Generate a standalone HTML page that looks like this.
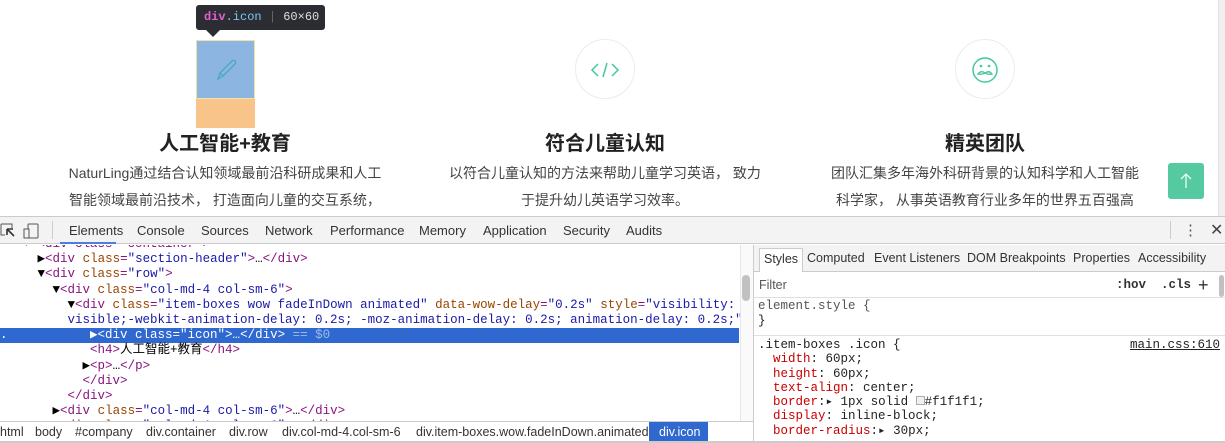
<!DOCTYPE html>
<html><head><meta charset="utf-8"><style>
*{margin:0;padding:0;box-sizing:border-box}
body{width:1225px;height:443px;overflow:hidden;background:#fff;position:relative;font-family:"Liberation Sans","Noto Sans CJK SC",sans-serif}
.a{position:absolute}
.h{font-size:20px;font-weight:bold;color:#222;text-align:center;width:380px}
.p{font-size:14px;color:#444;text-align:center;width:380px;line-height:27px}
.circ{width:60px;height:60px;border:1px solid #ececec;border-radius:30px}
.mono{font-family:"Liberation Mono","DejaVu Sans Mono",monospace;font-size:12.5px}
.lines div{white-space:pre;height:15.2px}
.tag{color:#881280}.at{color:#994500}.av{color:#1a1aa6}
.row span{position:absolute;top:0;white-space:pre}
</style></head><body>
<div class="a" style="left:1218px;top:0;width:7px;height:216px;background:#f0f0f0;border-left:1px solid #e0e0e0"></div>
<div class="a" style="left:196px;top:5px;width:129px;height:25px;background:#2b2d33;border-radius:3px;font-family:'Liberation Mono',monospace;font-size:12px;line-height:25px;padding-left:8px;color:#ddd;white-space:pre"><span style="color:#e35fd4;font-weight:bold">div</span><span style="color:#7fc7f0">.icon</span> <span style="color:#666">|</span> 60×60</div>
<div class="a" style="left:206px;top:30px;width:0;height:0;border-left:7px solid transparent;border-right:7px solid transparent;border-top:7px solid #2b2d33"></div>
<div class="a" style="left:196px;top:40px;width:59px;height:59px;background:#8db5e2;border:1px solid #f1e2a8"></div>
<div class="a" style="left:196px;top:99px;width:59px;height:29px;background:#f8c48a"></div>
<svg class="a" style="left:210px;top:54px" width="32" height="32" viewBox="0 0 32 32"><path d="M8 25 L10 19 L22 7 a2 2 0 0 1 3 3 L13 22 Z M10 19 L13 22" fill="none" stroke="#4ba8c7" stroke-width="1.3"/></svg>
<div class="a circ" style="left:575px;top:39px"></div>
<svg class="a" style="left:590px;top:60px" width="30" height="20" viewBox="0 0 30 20"><path d="M8 4 L2 10 L8 16 M22 4 L28 10 L22 16 M17 3 L13 17" fill="none" stroke="#45c99b" stroke-width="1.5"/></svg>
<div class="a circ" style="left:955px;top:39px"></div>
<svg class="a" style="left:970px;top:55px" width="30" height="30" viewBox="0 0 30 30"><circle cx="15" cy="15" r="12" fill="none" stroke="#45c99b" stroke-width="1.5"/><circle cx="11" cy="11" r="1.3" fill="#45c99b"/><circle cx="19" cy="11" r="1.3" fill="#45c99b"/><path d="M8 19 q3 -4 7 -1 q4 -3 7 1 q-3 1 -7 -1 q-4 2 -7 1z" fill="none" stroke="#45c99b" stroke-width="1.4"/></svg>
<div class="a h" style="left:35px;top:127px">人工智能+教育</div>
<div class="a h" style="left:415px;top:127px">符合儿童认知</div>
<div class="a h" style="left:795px;top:127px">精英团队</div>
<div class="a p" style="left:35px;top:160px">NaturLing通过结合认知领域最前沿科研成果和人工<br>智能领域最前沿技术， 打造面向儿童的交互系统，</div>
<div class="a p" style="left:415px;top:160px">以符合儿童认知的方法来帮助儿童学习英语， 致力<br>于提升幼儿英语学习效率。</div>
<div class="a p" style="left:795px;top:160px">团队汇集多年海外科研背景的认知科学和人工智能<br>科学家， 从事英语教育行业多年的世界五百强高</div>
<div class="a" style="left:1168px;top:163px;width:36px;height:36px;background:#55c9a0;border-radius:3px"></div>
<svg class="a" style="left:1176px;top:171px" width="20" height="20"><path d="M10 3 V17 M5 8 L10 3 L15 8" fill="none" stroke="#e8fff5" stroke-width="1.3"/></svg>
<div class="a" style="left:0;top:216px;width:1225px;height:1px;background:#cbcbcb"></div>
<div class="a" style="left:0;top:217px;width:1225px;height:27px;background:#f3f3f3;border-bottom:1px solid #ccc"></div>
<svg class="a" style="left:0;top:222px" width="45" height="18"><path d="M1 2 H12 V6 M1 2 V13 H5" fill="none" stroke="#555"/><path d="M7 7 L14 14 M7 7 V13 M7 7 H13" stroke="#333" stroke-width="1.6" fill="none"/><rect x="28" y="2" width="10" height="14" rx="1" fill="none" stroke="#555"/><rect x="24" y="7" width="5" height="9" fill="#f3f3f3" stroke="#555"/></svg>
<div class="a" style="left:52px;top:221px;width:1px;height:18px;background:#ccc"></div>
<div class="a row" style="left:0;top:217px;width:740px;height:27px;font-size:13px;color:#333;line-height:27px"><span style="left:69px">Elements</span><span style="left:137px">Console</span><span style="left:201px">Sources</span><span style="left:265px">Network</span><span style="left:330px">Performance</span><span style="left:419px">Memory</span><span style="left:483px">Application</span><span style="left:563px">Security</span><span style="left:626px">Audits</span></div>
<div class="a" style="left:60px;top:242px;width:56px;height:2px;background:#4a7fe1"></div>
<div class="a" style="left:1170px;top:221px;width:1px;height:18px;background:#ccc"></div>
<div class="a" style="left:1183px;top:218px;font-size:15px;color:#555;line-height:25px">⋮</div>
<div class="a" style="left:1210px;top:218px;font-size:16px;color:#444;line-height:25px">✕</div>
<div class="a" style="left:740px;top:245px;width:13px;height:176px;background:#fafafa;border-left:1px solid #e6e6e6"></div>
<div class="a" style="left:742px;top:275px;width:8px;height:26px;background:#c1c1c1;border-radius:4px"></div>
<div class="a" style="left:753px;top:245px;width:1px;height:198px;background:#ccc"></div>
<div class="a mono" style="left:0;top:245px;width:740px;height:176px;overflow:hidden">
<div class="lines" style="margin-top:-8px;line-height:15.2px">
<div style="color:#881280">   ▾ &lt;div class="container"&gt;</div>
<div>     ▶<span class="tag">&lt;div </span><span class="at">class</span><span class="tag">=</span><span class="av">"section-header"</span><span class="tag">&gt;</span>…<span class="tag">&lt;/div&gt;</span></div>
<div>     ▼<span class="tag">&lt;div </span><span class="at">class</span><span class="tag">=</span><span class="av">"row"</span><span class="tag">&gt;</span></div>
<div>       ▼<span class="tag">&lt;div </span><span class="at">class</span><span class="tag">=</span><span class="av">"col-md-4 col-sm-6"</span><span class="tag">&gt;</span></div>
<div>         ▼<span class="tag">&lt;div </span><span class="at">class</span><span class="tag">=</span><span class="av">"item-boxes wow fadeInDown animated"</span> <span class="at">data-wow-delay</span><span class="tag">=</span><span class="av">"0.2s"</span> <span class="at">style</span><span class="tag">=</span><span class="av">"visibility:</span></div>
<div>         <span class="av">visible;-webkit-animation-delay: 0.2s; -moz-animation-delay: 0.2s; animation-delay: 0.2s;"</span><span class="tag">&gt;</span></div>
<div style="background:#2f69d0;color:#fff;width:739px">.           ▶&lt;div class="icon"&gt;…&lt;/div&gt; <span style="color:#9fb8e8">== $0</span></div>
<div>            <span class="tag">&lt;h4&gt;</span>人工智能+教育<span class="tag">&lt;/h4&gt;</span></div>
<div>           ▶<span class="tag">&lt;p&gt;</span>…<span class="tag">&lt;/p&gt;</span></div>
<div>           <span class="tag">&lt;/div&gt;</span></div>
<div>         <span class="tag">&lt;/div&gt;</span></div>
<div>       ▶<span class="tag">&lt;div </span><span class="at">class</span><span class="tag">=</span><span class="av">"col-md-4 col-sm-6"</span><span class="tag">&gt;</span>…<span class="tag">&lt;/div&gt;</span></div>
<div>       ▶<span class="tag">&lt;div </span><span class="at">class</span><span class="tag">=</span><span class="av">"col-md-4 col-sm-6"</span><span class="tag">&gt;</span>…<span class="tag">&lt;/div&gt;</span></div>
</div></div>
<div class="a row" style="left:0;top:421px;width:753px;height:22px;background:#fff;border-top:1px solid #ccc;font-size:12.5px;color:#333;line-height:21px"><span style="left:0">html</span><span style="left:35px">body</span><span style="left:75px">#company</span><span style="left:146px">div.container</span><span style="left:229px">div.row</span><span style="left:282px">div.col-md-4.col-sm-6</span><span style="left:416px">div.item-boxes.wow.fadeInDown.animated</span><span style="left:649px;width:59px;height:21px;background:#2f69d0;color:#fff;padding-left:10px">div.icon</span></div>
<div class="a row" style="left:754px;top:245px;width:471px;height:27px;background:#f3f3f3;border-bottom:1px solid #ccc;font-size:12.5px;color:#333;line-height:27px"><span style="left:5px;top:3px;height:24px;line-height:21px;padding:0 4px;background:#fff;border:1px solid #ccc;border-bottom:none">Styles</span><span style="left:53px">Computed</span><span style="left:120px">Event Listeners</span><span style="left:213px">DOM Breakpoints</span><span style="left:319px">Properties</span><span style="left:384px">Accessibility</span></div>
<div class="a row" style="left:754px;top:272px;width:471px;height:26px;border-bottom:1px solid #e0e0e0;font-size:12.5px;color:#555;line-height:26px"><span style="left:5px">Filter</span><span class="mono" style="left:362px;font-weight:bold;color:#333">:hov  .cls</span><span style="left:444px;font-size:18px;color:#333">+</span></div>
<div class="a" style="left:1219px;top:275px;width:5px;height:22px;background:#c1c1c1;border-radius:3px"></div>
<div class="a mono" style="left:758px;top:299px;line-height:15px;color:#555">element.style {<br><span style="color:#222">}</span></div>
<div class="a" style="left:754px;top:335px;width:471px;height:1px;background:#e0e0e0"></div>
<div class="a mono" style="left:758px;top:338px;line-height:14.3px;color:#222;white-space:pre">.item-boxes .icon {
  <span style="color:#c80000">width</span>: 60px;
  <span style="color:#c80000">height</span>: 60px;
  <span style="color:#c80000">text-align</span>: center;
  <span style="color:#c80000">border</span>:▸ 1px solid <span style="display:inline-block;width:9px;height:9px;border:1px solid #aaa;background:#f1f1f1"></span>#f1f1f1;
  <span style="color:#c80000">display</span>: inline-block;
  <span style="color:#c80000">border-radius</span>:▸ 30px;</div>
<div class="a mono" style="left:1130px;top:338px;line-height:14.3px;color:#222;text-decoration:underline">main.css:610</div>
<div class="a" style="left:0;top:441px;width:1225px;height:2px;background:#ccc"></div>
</body></html>
